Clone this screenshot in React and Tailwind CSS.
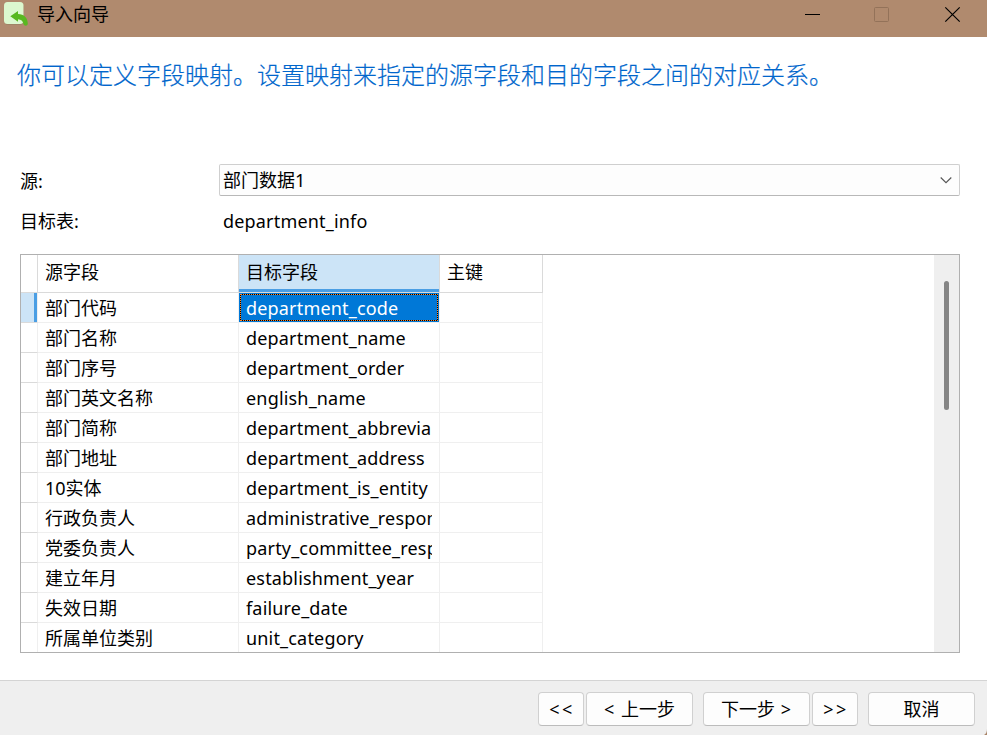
const rows = [
  ['部门代码', 'department_code'],
  ['部门名称', 'department_name'],
  ['部门序号', 'department_order'],
  ['部门英文名称', 'english_name'],
  ['部门简称', 'department_abbrevia'],
  ['部门地址', 'department_address'],
  ['10实体', 'department_is_entity'],
  ['行政负责人', 'administrative_respon'],
  ['党委负责人', 'party_committee_resp'],
  ['建立年月', 'establishment_year'],
  ['失效日期', 'failure_date'],
  ['所属单位类别', 'unit_category'],
];

function TitleBar() {
  return (
    <header className="flex h-[37px] shrink-0 items-start bg-[#b08a6e]">
      <svg className="ml-1 mt-0.5 h-[24px] w-[25px]" viewBox="0 0 25 24">
        <rect x="0.5" y="0.8" width="19" height="22" rx="3.5" fill="#8c7c5c" opacity="0.6" />
        <rect x="0" y="0" width="19.5" height="22" rx="3.5" fill="#dcf8cf" />
        <path d="M6.3 14.3 14 9v3.100c6 .2 9.700 3.700 9.800 9.700 0 2.400-3.800 2.400-4.300.300-.700-3.300-2.300-4.700-5.500-4.900v2.600z" fill="#58b820" />
      </svg>
      <span className="ml-2 mt-px text-[18px] leading-[26px]">导入向导</span>
      <svg className="ml-auto h-[30px] w-[182px]" viewBox="0 0 182 30" fill="none">
        <path d="M0 14.500h15" stroke="#000" />
        <rect x="69.500" y="7.500" width="14" height="14" rx="1" stroke="#937259" />
        <path d="M140.300 7.300l14.400 14.400M154.700 7.300l-14.400 14.400" stroke="#000" strokeWidth="1.200" />
      </svg>
    </header>
  );
}

function Button({ className, children }) {
  return (
    <button className={`h-[34px] shrink-0 whitespace-pre rounded border border-[#d0d0d0] border-b-[#bcbcbc] bg-[#fdfdfd] text-center text-[18px] leading-[32px] ${className}`}>
      {children}
    </button>
  );
}

function Cell({ className, children }) {
  return <div className={`overflow-hidden whitespace-nowrap border-b border-r ${className}`}>{children}</div>;
}

function MappingTable() {
  return (
    <section className="ml-5 mt-[18px] flex h-[399px] w-[940px] shrink-0 overflow-hidden border border-[#b0b0b0] bg-white">
      <div className="w-[522px] shrink-0">
        <div className="grid h-[38px] grid-cols-[17px_201px_201px_103px] leading-[35px]">
          <Cell className="border-[#dadada]" />
          <Cell className="border-[#dadada] pl-[7px]">源字段</Cell>
          <Cell className="border-[#dadada] p-0">
            <div className="h-[37px] border-b-[3px] border-[#4a9ee4] bg-[#cce4f7] pl-[7px]">目标字段</div>
          </Cell>
          <Cell className="border-[#dadada] pl-[7px]">主键</Cell>
        </div>
        {rows.map(([source, target], i) => (
          <div key={source} className="grid h-[30px] grid-cols-[17px_201px_201px_103px] leading-[30px]">
            <Cell className="border-b-[#dadada] border-r-[#efefef]">
              {i === 0 && <div className="h-[29px] border-r-[3px] border-[#4a9ee4] bg-[#cce4f7]" />}
            </Cell>
            <Cell className="border-[#efefef] pl-[7px]">{source}</Cell>
            <Cell className="border-[#efefef] tracking-[0.18px]">
              {i === 0 ? (
                <div className="h-[29px] bg-[#0078d7] p-px text-white">
                  <div className="h-[27px] border border-dotted border-[#ff8728] bg-black">
                    <div className="h-[25px] bg-[#0078d7] pl-[5px] leading-[26px]">{target}</div>
                  </div>
                </div>
              ) : (
                <div className="ml-[7px] w-[186px] overflow-hidden">{target}</div>
              )}
            </Cell>
            <Cell className="border-[#efefef]" />
          </div>
        ))}
      </div>
      <div className="ml-auto w-[25px] bg-[#efefef] pl-[10px] pt-[26px]">
        <div className="h-[129px] w-[5px] rounded-full bg-[#858585]" />
      </div>
    </section>
  );
}

export default function App() {
  return (
    <div className="flex h-[735px] w-[987px] flex-col overflow-hidden bg-white font-['Noto_Sans','Noto_Sans_CJK_SC',sans-serif] text-[18px] text-black">
      <TitleBar />
      <h1 className="ml-[17px] mt-[19px] h-9 shrink-0 whitespace-nowrap font-['Noto_Sans_CJK_SC',sans-serif] text-[24px] font-light leading-9 text-[#0066cc] [-webkit-text-stroke:0.2px_#0066cc]">
        你可以定义字段映射。设置映射来指定的源字段和目的字段之间的对应关系。
      </h1>
      <div className="ml-5 mt-[72px] flex h-8 w-[940px] shrink-0 items-center">
        <span className="w-[199px] pt-[2px]">源:</span>
        <div className="flex h-8 flex-1 items-center justify-between rounded-[2px] border border-[#cfcfcf] border-b-[#b8b8b8] bg-[#fdfdfd] pl-[3px] pr-[7px]">
          <span>部门数据1</span>
          <svg className="h-3 w-3" viewBox="0 0 12 12" fill="none">
            <path d="M0.700 3.500 6 8.700l5.300-5.200" stroke="#555" strokeWidth="1.100" />
          </svg>
        </div>
      </div>
      <div className="ml-5 mt-[10px] flex h-[30px] shrink-0 items-center">
        <span className="w-[203px]">目标表:</span>
        <span className="tracking-[0.18px]">department_info</span>
      </div>
      <MappingTable />
      <footer className="mt-[27px] flex h-[55px] shrink-0 border-t border-[#d4d4d4] bg-[#efefef] pl-[538px] pt-[11px]">
        <Button className="w-[46px] pl-[2px] tracking-[2.5px]">&lt;&lt;</Button>
        <Button className="ml-[2px] w-[107px]"><span className="tracking-[1px]">&lt; </span>上一步</Button>
        <Button className="ml-[10px] w-[107px]">下一步<span className="tracking-[1px]"> &gt;</span></Button>
        <Button className="ml-[2px] w-[46px] pl-[2px] tracking-[2.5px]">&gt;&gt;</Button>
        <Button className="ml-[10px] w-[107px]">取消</Button>
        <svg className="ml-auto h-[6px] w-[3px] self-end" viewBox="0 0 3 6">
          <path d="M3 0C3 3 2 5 0 6h3z" fill="#a98468" />
        </svg>
      </footer>
    </div>
  );
}
